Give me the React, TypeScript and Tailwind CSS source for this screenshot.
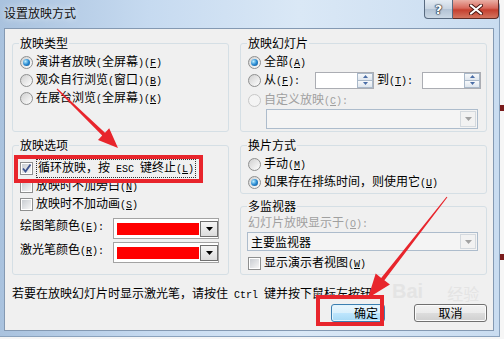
import React from "react";

// ASCII runs are set in a 6px-wide mono face, like the dialog's half-width glyphs
function T({ s, k }: { s: string; k?: string }) {
  const parts = s.split(/([\x20-\x7e]+)/).filter(Boolean);
  return (
    <>
      {parts.map((p, i) => {
        if (!/^[\x20-\x7e]+$/.test(p)) return <span key={i}>{p}</span>;
        const at = k ? p.indexOf(`(${k})`) : -1;
        return (
          <span key={i} className="whitespace-pre font-['Liberation_Mono',monospace] text-[10px]">
            {at < 0 ? (
              p
            ) : (
              <>
                {p.slice(0, at + 1)}
                <span className="underline underline-offset-1">{k}</span>
                {p.slice(at + 2)}
              </>
            )}
          </span>
        );
      })}
    </>
  );
}

function Radio({ checked = false, disabled = false }: { checked?: boolean; disabled?: boolean }) {
  return (
    <span
      className={
        disabled
          ? "flex h-[13px] w-[13px] shrink-0 items-center justify-center rounded-full border border-[#c8c8c8] bg-[#f4f4f4]"
          : "flex h-[13px] w-[13px] shrink-0 items-center justify-center rounded-full border border-[#8e8f8f] bg-[linear-gradient(135deg,#cfcfcf,#ffffff)]"
      }
    >
      {checked && (
        <span className="h-[7px] w-[7px] rounded-full bg-[radial-gradient(circle_at_35%_35%,#bdefff_0%,#2a8bd2_50%,#0b4c88_100%)]" />
      )}
    </span>
  );
}

function Check({ checked = false }: { checked?: boolean }) {
  return (
    <span className="flex h-[13px] w-[13px] shrink-0 items-center justify-center border border-[#8e8f8f] bg-white">
      <span className="flex h-[9px] w-[9px] items-center justify-center bg-[linear-gradient(135deg,#c9cdd2,#f6f6f6)]">
        {checked && (
          <svg width="11" height="11" viewBox="0 0 11 11" className="shrink-0">
            <path d="M2 5.5 L4.5 8.5 L9.5 1.5" stroke="#3f5590" strokeWidth="1.9" fill="none" />
          </svg>
        )}
      </span>
    </span>
  );
}

function SpinBox() {
  return (
    <div className="flex h-[17px] w-[59px] border border-[#abadb3] bg-white">
      <div className="flex-1" />
      <div className="flex w-[16px] flex-col border border-[#a9b8c9]">
        <div className="flex flex-1 items-center justify-center border-b border-[#a9b8c9] bg-[linear-gradient(#f7f9fb,#dfe6ee)]">
          <svg width="5" height="3" viewBox="0 0 5 3">
            <path d="M0 3h5L2.5 0z" fill="#4a6da6" />
          </svg>
        </div>
        <div className="flex flex-1 items-center justify-center bg-[linear-gradient(#f7f9fb,#dfe6ee)]">
          <svg width="5" height="3" viewBox="0 0 5 3">
            <path d="M0 0h5L2.5 3z" fill="#4a6da6" />
          </svg>
        </div>
      </div>
    </div>
  );
}

function Combo({ className, text }: { className: string; text?: string }) {
  return (
    <div className={`flex items-center border border-[#adbccc] bg-[#f4f4f4] pl-[3px] pr-[1px] ${className}`}>
      <span className="flex-1 leading-[14px]">{text}</span>
      <div className="flex h-[calc(100%-2px)] w-[16px] items-center justify-center border border-[#d4d9de] bg-[#f2f2f2]">
        <svg width="7" height="4" viewBox="0 0 7 4">
          <path d="M0 0h7L3.5 4z" fill="#a2a2a2" />
        </svg>
      </div>
    </div>
  );
}

function ColorPick() {
  return (
    <div className="flex h-[21px] w-[106px] items-center border border-[#a3a3a3] bg-white pl-[3px]">
      <div className="h-[12px] flex-1 bg-[#ff0000]" />
      <div className="ml-[1px] flex h-[16px] w-[18px] items-center justify-center border border-[#707070] bg-[linear-gradient(#f6f6f6,#dcdcdc)]">
        <svg width="7" height="4" viewBox="0 0 7 4">
          <path d="M0 0h7L3.5 4z" fill="#000" />
        </svg>
      </div>
    </div>
  );
}

function Group({ title, className, children }: { title: string; className: string; children?: React.ReactNode }) {
  return (
    <div className={`flex flex-col rounded-[3px] border border-[#d5dfe5] pl-[7px] ${className}`}>
      <div className="-ml-[1px] -mt-[8px] h-[14px] w-fit bg-[#f0f0f0] px-[1px] leading-[14px]">{title}</div>
      {children}
    </div>
  );
}

function Row({ children, className = "" }: { children: React.ReactNode; className?: string }) {
  return <div className={`flex h-[18px] items-center gap-[3px] ${className}`}>{children}</div>;
}

export default function App() {
  return (
    <div className="relative flex h-[339px] w-[504px] overflow-hidden bg-[#f6f6f6] font-['Noto_Sans_CJK_SC','Noto_Sans',sans-serif] text-[12px] text-black">
      {/* window */}
      <div className="flex h-[337px] w-[500px] shrink-0 flex-col rounded-tr-[6px] border-r border-b border-[#8aa2bd] bg-[linear-gradient(90deg,#a9c2de_0%,#c6daf0_30%,#dae8f6_60%,#c9dcf0_100%)] pl-[4px]">
        <div className="flex h-[28px] items-start">
          <span className="mt-[5px] leading-[16px] text-[#111] [text-shadow:0_0_6px_#ffffff]">设置放映方式</span>
          <div className="ml-auto flex">
            <div className="flex h-[19px] w-[29px] items-center justify-center rounded-bl-[4px] border border-t-0 border-[#586a80] bg-[linear-gradient(#e4ecf4,#c8d4e1_50%,#b2c2d4_51%,#cbd8e5)]">
              <span className="font-['DejaVu_Sans',sans-serif] text-[13px] font-bold leading-[13px] text-white [text-shadow:0_0_1px_#1e2a3a,0_0_1px_#1e2a3a,0_0_1px_#1e2a3a,0_0_2px_#1e2a3a]">
                ?
              </span>
            </div>
            <div className="flex h-[19px] w-[46px] items-center justify-center rounded-br-[4px] border border-l-0 border-t-0 border-[#5e2a24] bg-[linear-gradient(#eab0a6,#d8695c_45%,#c5402f_55%,#d3745f)]">
              <svg width="14" height="11" viewBox="0 0 14 11">
                <path d="M2 1.5 L12 9.5 M12 1.5 L2 9.5" stroke="#4a1610" strokeWidth="4" strokeLinecap="round" />
                <path d="M2 1.5 L12 9.5 M12 1.5 L2 9.5" stroke="#ffffff" strokeWidth="2.2" strokeLinecap="round" />
              </svg>
            </div>
          </div>
        </div>

        {/* client area */}
        <div className="flex h-[303px] w-[490px] flex-col border border-[#8499b2] bg-[#f0f0f0] pl-[7px] pr-[6px] pt-[14px]">
          <div className="flex gap-[11px]">
            <div className="flex w-[217px] flex-col">
              <Group title="放映类型" className="h-[89px]">
                <Row className="mt-[3px]">
                  <Radio checked />
                  <span className="leading-[14px]">
                    <T s="演讲者放映(全屏幕)(F)" k="F" />
                  </span>
                </Row>
                <Row>
                  <Radio />
                  <span className="leading-[14px]">
                    <T s="观众自行浏览(窗口)(B)" k="B" />
                  </span>
                </Row>
                <Row>
                  <Radio />
                  <span className="leading-[14px]">
                    <T s="在展台浏览(全屏幕)(K)" k="K" />
                  </span>
                </Row>
              </Group>

              <Group title="放映选项" className="mt-[13px] h-[130px]">
                <Row className="mt-[7px]">
                  <Check checked />
                  <span className="border border-dotted border-[#333] px-[1px] leading-[14px]">
                    <T s="循环放映，按 ESC 键终止(L)" k="L" />
                  </span>
                </Row>
                <Row>
                  <Check />
                  <span className="leading-[14px]">
                    <T s="放映时不加旁白(N)" k="N" />
                  </span>
                </Row>
                <Row>
                  <Check />
                  <span className="leading-[14px]">
                    <T s="放映时不加动画(S)" k="S" />
                  </span>
                </Row>
                <div className="mt-[5px] flex h-[21px] items-start">
                  <span className="w-[93px] leading-[14px]">
                    <T s="绘图笔颜色(E):" k="E" />
                  </span>
                  <ColorPick />
                </div>
                <div className="mt-[3px] flex h-[21px] items-start">
                  <span className="w-[93px] leading-[14px]">
                    <T s="激光笔颜色(R):" k="R" />
                  </span>
                  <ColorPick />
                </div>
              </Group>
            </div>

            <div className="flex w-[247px] flex-col">
              <Group title="放映幻灯片" className="h-[89px]">
                <Row className="mt-[3px]">
                  <Radio checked />
                  <span className="leading-[14px]">
                    <T s="全部(A)" k="A" />
                  </span>
                </Row>
                <Row>
                  <Radio />
                  <span className="w-[48px] leading-[14px]">
                    <T s="从(F):" k="F" />
                  </span>
                  <SpinBox />
                  <span className="w-[45px] leading-[14px]">
                    <T s="到(T):" k="T" />
                  </span>
                  <span className="-ml-[3px]">
                    <SpinBox />
                  </span>
                </Row>
                <div className="mt-[3px] flex h-[16px] items-center gap-[3px] text-[#a0a0a0]">
                  <Radio disabled />
                  <span className="leading-[14px]">
                    <T s="自定义放映(C):" k="C" />
                  </span>
                </div>
                <Combo className="ml-[18px] mt-[1px] h-[20px] w-[212px]" />
              </Group>

              <Group title="换片方式" className="mt-[13px] h-[49px]">
                <Row className="mt-[3px]">
                  <Radio />
                  <span className="leading-[14px]">
                    <T s="手动(M)" k="M" />
                  </span>
                </Row>
                <Row>
                  <Radio checked />
                  <span className="leading-[14px]">
                    <T s="如果存在排练时间，则使用它(U)" k="U" />
                  </span>
                </Row>
              </Group>

              <Group title="多监视器" className="mt-[12px] h-[69px]">
                <div className="mt-[2px] flex h-[16px] items-center text-[#a0a0a0]">
                  <span className="leading-[14px]">
                    <T s="幻灯片放映显示于(O):" k="O" />
                  </span>
                </div>
                <Combo className="-ml-[1px] mt-[1px] h-[19px] w-[231px]" text="主要监视器" />
                <Row className="mt-[3px]">
                  <Check />
                  <span className="leading-[14px]">
                    <T s="显示演示者视图(W)" k="W" />
                  </span>
                </Row>
              </Group>
            </div>
          </div>

          <div className="mt-[10px] h-[16px] leading-[16px]">
            <T s="若要在放映幻灯片时显示激光笔，请按住 Ctrl 键并按下鼠标左按钮。" />
          </div>

          <div className="mt-[3px] flex h-[18px] justify-end gap-[29px]">
            <div className="flex w-[54px] items-center rounded-[3px] border border-[#3c7fb1] bg-[linear-gradient(#eaf6fd,#d9f0fc_50%,#bee6fd_51%,#a7d9f5)] pl-[22px] leading-[14px] shadow-[inset_0_0_0_1px_#e2f4fd]">
              确定
            </div>
            <div className="flex w-[73px] items-center justify-center rounded-[3px] border border-[#707070] bg-[linear-gradient(#f2f2f2,#ebebeb_50%,#dddddd_51%,#cfcfcf)] leading-[14px] shadow-[inset_0_0_0_1px_#fbfbfb]">
              取消
            </div>
          </div>
        </div>
      </div>

      {/* page behind the window */}
      <div className="flex flex-1 flex-col">
        <div className="mt-[105px] h-[6px] w-[4px] bg-[#7a1b1b]" />
        <div className="mt-[143px] h-[6px] w-[4px] bg-[#7a1b1b]" />
      </div>

      {/* faint watermark */}
      <div className="pointer-events-none absolute left-[392px] top-[281px] flex items-end leading-none text-[#e4e4e4]">
        <span className="font-['Liberation_Sans',sans-serif] text-[20px] font-bold">Bai</span>
        <span className="ml-[24px] text-[16px]">经验</span>
      </div>

      {/* red annotations */}
      <svg className="pointer-events-none absolute left-0 top-0" width="504" height="339" viewBox="0 0 504 339">
        <rect x="16" y="157" width="185" height="24" fill="none" stroke="#e8252c" strokeWidth="4" />
        <rect x="318" y="297" width="64" height="27" fill="none" stroke="#e8252c" strokeWidth="4" />
        <polygon
          points="56.6,89.4 102.2,135.5 98,139.9 118,148 109.2,128.3 105,132.7 57.4,88.6"
          fill="#e8252c"
        />
        <polygon
          points="447.4,197.3 384.4,280.3 389.9,284.6 368,298 375.7,273.6 381.2,277.9 446.6,196.7"
          fill="#e8252c"
        />
      </svg>
    </div>
  );
}
